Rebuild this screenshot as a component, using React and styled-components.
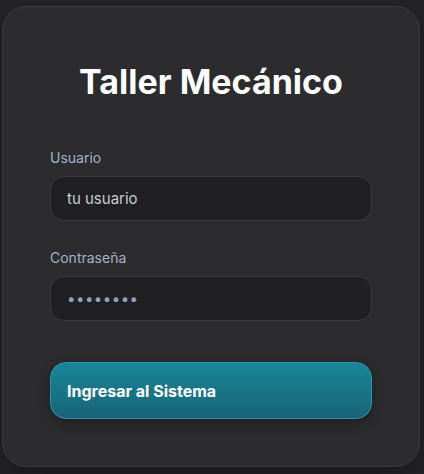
import React from "react";
import styled, { createGlobalStyle } from "styled-components";

const Global = createGlobalStyle`
  html, body { margin: 0; padding: 0; background: #252528; }
  body { font-family: Inter, "Noto Sans", sans-serif; }
  * { box-sizing: border-box; }
`;

const Page = styled.div`
  width: 424px;
  height: 474px;
  padding: 6px 4px 7px 2px;
  background: #252528;
`;

const Card = styled.form`
  height: 100%;
  background: #2c2c2f;
  border: 1px solid #3a3a3e;
  border-radius: 24px;
  padding: 55px 47px 0 47px;
  display: flex;
  flex-direction: column;
  box-shadow: 0 8px 24px rgba(0, 0, 0, 0.35);
`;

const Title = styled.h1`
  margin: 0 0 47px;
  text-align: center;
  font-size: 34px;
  line-height: 40px;
  font-weight: 700;
  color: #ffffff;
  letter-spacing: 0;
`;

const Field = styled.div`
  display: flex;
  flex-direction: column;
  gap: 10px;
  margin-bottom: ${(p) => p.$mb || 0}px;
`;

const Label = styled.label`
  font-size: 14px;
  line-height: 17px;
  color: #a3b2c6;
`;

const Input = styled.input`
  height: 45px;
  width: 100%;
  background: #202023;
  border: 1px solid #3a3a3e;
  border-radius: 14px;
  padding: 0 16px;
  font-family: Inter, sans-serif;
  font-size: 15px;
  color: ${(p) => (p.$dots ? "#8ea3c4" : "#c5ccd6")};
  letter-spacing: ${(p) => (p.$dots ? "0.5px" : "0")};
  outline: none;
  &::placeholder { color: #c5ccd6; }
`;

const Button = styled.button`
  margin-top: 41px;
  height: 57px;
  width: 100%;
  border-radius: 16px;
  border: 1px solid #2b96ab;
  background: linear-gradient(180deg, #1b8699 0%, #176577 100%);
  color: #ffffff;
  font-family: Inter, sans-serif;
  font-size: 16px;
  font-weight: 700;
  text-align: left;
  padding: 0 16px;
  box-shadow: 0 4px 12px rgba(0, 0, 0, 0.3);
  cursor: pointer;
`;

export default function App() {
  return (
    <>
      <Global />
      <Page>
        <Card onSubmit={(e) => e.preventDefault()}>
          <Title>Taller Mecánico</Title>
          <Field $mb={28}>
            <Label>Usuario</Label>
            <Input placeholder="tu usuario" />
          </Field>
          <Field>
            <Label>Contraseña</Label>
            <Input type="password" defaultValue="12345678" $dots />
          </Field>
          <Button type="submit">Ingresar al Sistema</Button>
        </Card>
      </Page>
    </>
  );
}
